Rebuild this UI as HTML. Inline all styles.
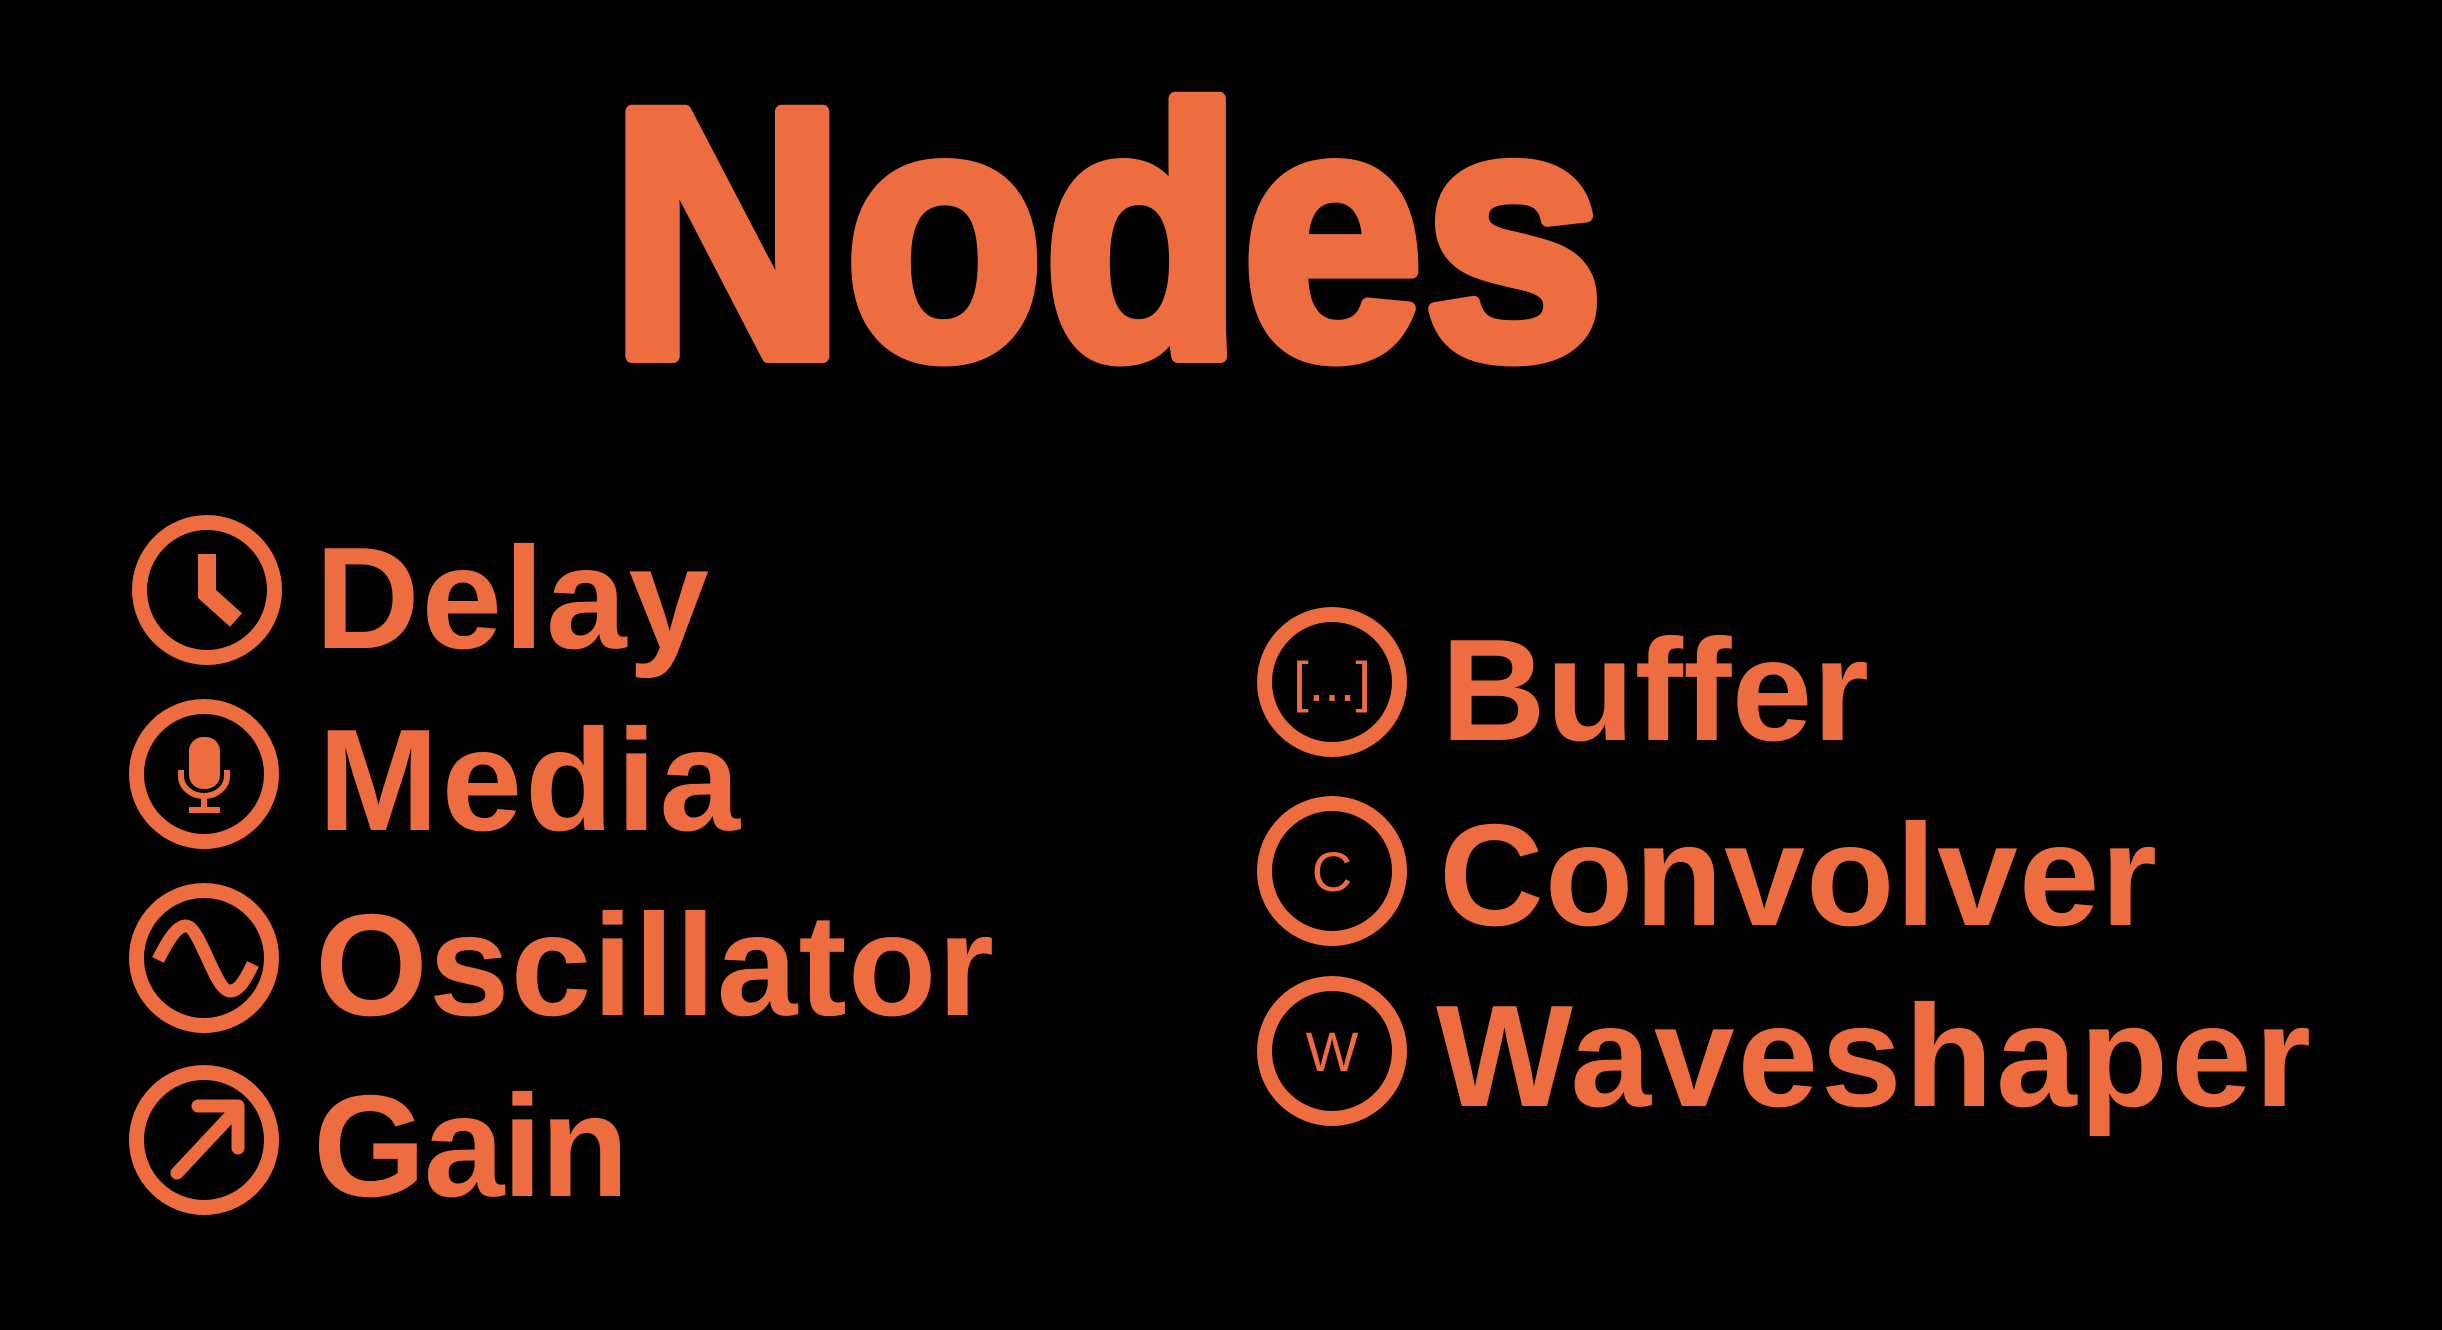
<!DOCTYPE html>
<html><head><meta charset="utf-8"><style>
html,body{margin:0;padding:0;background:#000;width:2442px;height:1330px;overflow:hidden}
svg{display:block}
</style></head><body>
<svg width="2442" height="1330" viewBox="0 0 2442 1330" xmlns="http://www.w3.org/2000/svg">
<rect width="2442" height="1330" fill="#000"/>
<g fill="#ED6D40" font-family="Liberation Sans, sans-serif">
<text x="624" y="356" font-size="355" font-weight="bold" textLength="994" lengthAdjust="spacingAndGlyphs" stroke="#ED6D40" stroke-width="14" stroke-linejoin="round" transform="translate(-14,0)">Nodes</text>
<g font-size="145" font-weight="bold">
<text x="315" y="648" textLength="394">Delay</text>
<text x="318" y="830" textLength="422">Media</text>
<text x="315" y="1015" textLength="679">Oscillator</text>
<text x="313" y="1196" textLength="316">Gain</text>
<text x="1441" y="740" textLength="428">Buffer</text>
<text x="1439" y="925" textLength="718">Convolver</text>
<text x="1436" y="1106" textLength="875">Waveshaper</text>
</g>
<g font-size="56" text-anchor="middle">
<text x="1332" y="701">[...]</text>
<text x="1332" y="891">C</text>
<text x="1332" y="1071">W</text>
</g>
</g>
<g fill="none" stroke="#ED6D40" stroke-width="15">
<circle cx="207" cy="590" r="67.5"/>
<circle cx="204" cy="774" r="67.5"/>
<circle cx="204" cy="958" r="67.5"/>
<circle cx="204" cy="1140" r="67.5"/>
<circle cx="1332" cy="682" r="67.5"/>
<circle cx="1332" cy="871" r="67.5"/>
<circle cx="1332" cy="1051" r="67.5"/>
</g>
<g fill="none" stroke="#ED6D40">
<polyline points="207,554 207,594 236,620" stroke-width="18"/>
<path d="M181,770 v6 a23,20 0 0 0 46,0 v-6" stroke-width="6"/>
<line x1="204" y1="796" x2="204" y2="810" stroke-width="6"/>
<line x1="189" y1="810" x2="220" y2="810" stroke-width="6"/>
<path d="M158,960 C170,936 178,926 186,926 C200,926 215,991 230,991 C240,991 247,976 253,964" stroke-width="13"/>
<path d="M177,1173 L236,1110" stroke-width="13" stroke-linecap="round"/>
<path d="M198,1106 H238 V1148" stroke-width="13" stroke-linecap="round" stroke-linejoin="round"/>
</g>
<rect x="189" y="737" width="31" height="52" rx="14" fill="#ED6D40"/>
</svg>
</body></html>
